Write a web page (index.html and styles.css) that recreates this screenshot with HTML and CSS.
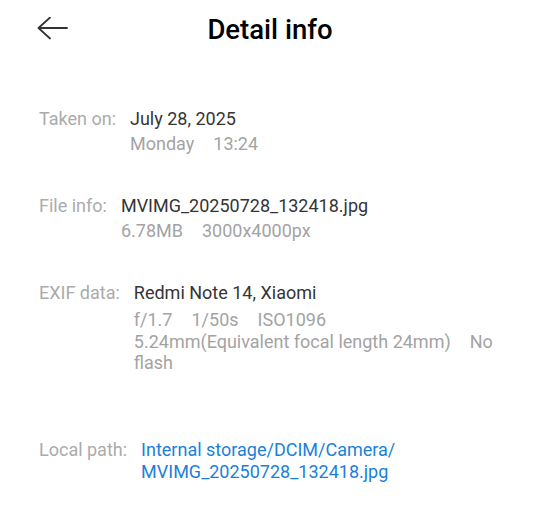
FILE: index.html
```html
<!DOCTYPE html>
<html>
<head>
<meta charset="utf-8">
<link rel="stylesheet" href="styles.css">
</head>
<body>
<div class="header">
  <svg class="back" width="32" height="24" viewBox="0 0 32 24">
    <path d="M1.5 11 H30 M13 0.5 L1.5 11 L13 21.5" fill="none" stroke="#333" stroke-width="1.8" stroke-linecap="round" stroke-linejoin="round"/>
  </svg>
  <div class="title">Detail info</div>
</div>
<div class="content">
  <div class="row r1">
    <div class="label">Taken on:</div>
    <div class="value">
      <div class="main">July 28, 2025</div>
      <div class="sec first">Monday<span class="sp"></span>13:24</div>
    </div>
  </div>
  <div class="row r2">
    <div class="label">File info:</div>
    <div class="value">
      <div class="main">MVIMG_20250728_132418.jpg</div>
      <div class="sec first">6.78MB<span class="sp"></span>3000x4000px</div>
    </div>
  </div>
  <div class="row r3">
    <div class="label">EXIF data:</div>
    <div class="value">
      <div class="main">Redmi Note 14, Xiaomi</div>
      <div class="sec first">f/1.7<span class="sp"></span>1/50s<span class="sp"></span>ISO1096</div>
      <div class="sec">5.24mm(Equivalent focal length 24mm)<span class="sp"></span>No<br>flash</div>
    </div>
  </div>
  <div class="row r4">
    <div class="label">Local path:</div>
    <div class="value">
      <div class="link">Internal storage/DCIM/Camera/<br>MVIMG_20250728_132418.jpg</div>
    </div>
  </div>
</div>
</body>
</html>
```
FILE: styles.css
```css
html, body {
  margin: 0;
  padding: 0;
  background: #ffffff;
  font-family: Roboto, "Noto Sans", sans-serif;
}
.header {
  position: relative;
  height: 58px;
  display: flex;
  align-items: center;
  justify-content: center;
}
.back {
  position: absolute;
  left: 37px;
  top: 17px;
}
.title {
  font-size: 27.5px;
  font-weight: 500;
  color: #000;
}
.content {
  padding: 49px 38px 0 39px;
}
.row {
  display: flex;
  gap: 14px;
}
.label {
  font-size: 18px;
  line-height: 24px;
  color: #ababab;
  white-space: nowrap;
  flex: none;
}
.value {
  flex: 1;
  min-width: 0;
}
.main {
  font-size: 18px;
  line-height: 24px;
  color: #353535;
}
.sec {
  font-size: 18px;
  line-height: 21.5px;
  color: #a3a3a3;
}
.sec.first {
  margin-top: 2px;
}
.r3 .sec.first {
  margin-top: 4.5px;
}
.sp {
  display: inline-block;
  width: 19px;
}
.link {
  font-size: 18px;
  line-height: 22px;
  color: #1b7fdb;
}
.r2 { margin-top: 39.5px; }
.r3 { margin-top: 39px; }
.r4 { margin-top: 65px; }
.r4 .label { line-height: 22px; }
```
